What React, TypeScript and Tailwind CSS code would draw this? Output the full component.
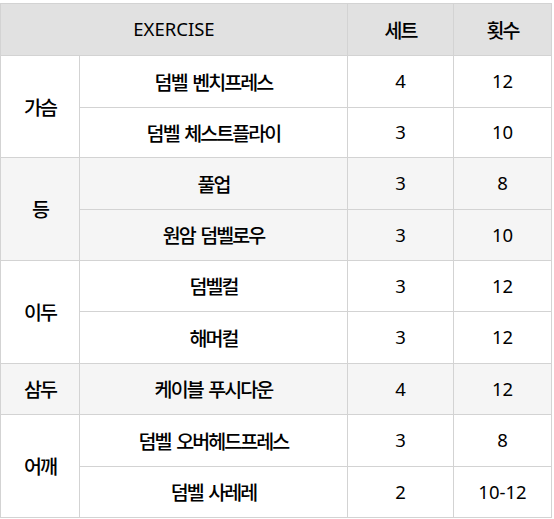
import React from "react";

type Row = { ex: string; sets: string; reps: string };
type Group = { part: string; rows: Row[] };

const groups: Group[] = [
  { part: "가슴", rows: [ { ex: "덤벨 벤치프레스", sets: "4", reps: "12" }, { ex: "덤벨 체스트플라이", sets: "3", reps: "10" } ] },
  { part: "등", rows: [ { ex: "풀업", sets: "3", reps: "8" }, { ex: "원암 덤벨로우", sets: "3", reps: "10" } ] },
  { part: "이두", rows: [ { ex: "덤벨컬", sets: "3", reps: "12" }, { ex: "해머컬", sets: "3", reps: "12" } ] },
  { part: "삼두", rows: [ { ex: "케이블 푸시다운", sets: "4", reps: "12" } ] },
  { part: "어깨", rows: [ { ex: "덤벨 오버헤드프레스", sets: "3", reps: "8" }, { ex: "덤벨 사레레", sets: "2", reps: "10-12" } ] },
];

const rowHeights = [51, 51, 49, 51, 50, 50, 51, 50, 51, 50];

const ko = "text-[19.5px] font-medium tracking-[-1.9px] [word-spacing:3px] [font-family:'Noto_Sans_CJK_KR',sans-serif]";
const num = "text-[18.5px] [font-family:'Noto_Sans',sans-serif]";

export default function App() {
  const cells: React.ReactNode[] = [];
  const hdr = "bg-[#e1e1e1] flex items-center justify-center";
  cells.push(<div key="h1" className={`${hdr} ${num} col-span-2`}>EXERCISE</div>);
  cells.push(<div key="h2" className={`${hdr} ${ko}`}>세트</div>);
  cells.push(<div key="h3" className={`${hdr} ${ko}`}>횟수</div>);
  groups.forEach((g, gi) => {
    const bg = gi % 2 === 1 ? "bg-[#f5f5f5]" : "bg-white";
    const base = `${bg} flex items-center justify-center`;
    g.rows.forEach((r, ri) => {
      if (ri === 0) {
        cells.push(
          <div key={`p${gi}`} className={`${base} ${ko}`} style={{ gridRow: `span ${g.rows.length}` }}>
            {g.part}
          </div>
        );
      }
      cells.push(<div key={`e${gi}-${ri}`} className={`${base} ${ko}`}>{r.ex}</div>);
      cells.push(<div key={`s${gi}-${ri}`} className={`${base} ${num}`}>{r.sets}</div>);
      cells.push(<div key={`r${gi}-${ri}`} className={`${base} ${num}`}>{r.reps}</div>);
    });
  });

  return (
    <div className="w-[554px] h-[519px] bg-white pt-[3px]">
      <div
        className="grid w-[552px] gap-px bg-[#d3d3d3] p-px text-black leading-none"
        style={{ gridTemplateColumns: "78px 267px 105px 97px", gridTemplateRows: rowHeights.map((h) => `${h}px`).join(" ") }}
      >
        {cells}
      </div>
    </div>
  );
}
